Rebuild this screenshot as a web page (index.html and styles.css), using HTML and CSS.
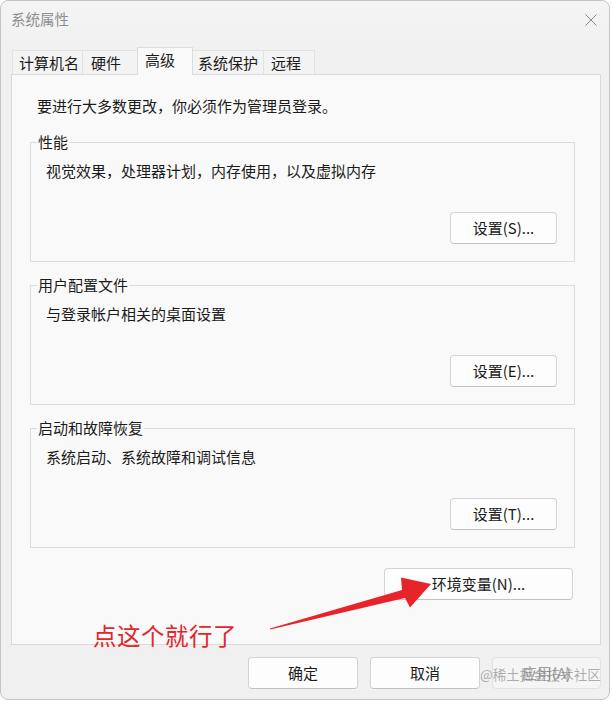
FILE: index.html
```html
<!DOCTYPE html>
<html lang="zh-CN">
<head>
<meta charset="utf-8">
<title>系统属性</title>
<link rel="stylesheet" href="styles.css">
</head>
<body>
<div class="window">
  <div class="titlebar">
    <span class="title">系统属性</span>
    <svg class="close" width="12" height="12" viewBox="0 0 12 12"><path d="M0.5 0.5 L11.5 11.5 M11.5 0.5 L0.5 11.5" stroke="#8a8a8a" stroke-width="1" fill="none"/></svg>
  </div>
  <div class="tabs">
    <div class="tab t-name">计算机名</div>
    <div class="tab t-hw">硬件</div>
    <div class="tab sel">高级</div>
    <div class="tab t-prot">系统保护</div>
    <div class="tab t-remote">远程</div>
  </div>
  <div class="panel">
    <p class="intro">要进行大多数更改，你必须作为管理员登录。</p>
    <fieldset class="group">
      <legend>性能</legend>
      <p class="desc">视觉效果，处理器计划，内存使用，以及虚拟内存</p>
      <div class="btnrow"><button class="btn set">设置(S)...</button></div>
    </fieldset>
    <fieldset class="group">
      <legend>用户配置文件</legend>
      <p class="desc">与登录帐户相关的桌面设置</p>
      <div class="btnrow"><button class="btn set">设置(E)...</button></div>
    </fieldset>
    <fieldset class="group">
      <legend>启动和故障恢复</legend>
      <p class="desc">系统启动、系统故障和调试信息</p>
      <div class="btnrow"><button class="btn set">设置(T)...</button></div>
    </fieldset>
    <div class="envrow"><button class="btn env">环境变量(N)...</button></div>
  </div>
  <div class="footer">
    <button class="btn foot">确定</button>
    <button class="btn foot">取消</button>
    <button class="btn foot disabled">应用(A)</button>
  </div>
  <svg class="arrow" width="613" height="702" viewBox="0 0 613 702">
    <polygon points="270,628.5 402,590 401,577.5 431,584 410,607.5 405,598 270,629.5" fill="#e8242b"/>
  </svg>
  <div class="note">点这个就行了</div>
  <div class="watermark">@稀土掘金技术社区</div>
</div>
</body>
</html>
```

FILE: styles.css
```css
* { box-sizing: border-box; }
html, body { margin: 0; padding: 0; }
body {
  background: #ffffff;
  width: 613px;
  height: 702px;
  overflow: hidden;
  font-family: "Noto Sans CJK SC", "Noto Sans", sans-serif;
  color: #1b1b1b;
}
.window {
  position: relative;
  width: 610px;
  height: 700px;
  background: #f0f0f0;
  border: 1px solid #c4c4c4;
  border-radius: 8px;
  display: flex;
  flex-direction: column;
}
.titlebar {
  height: 46px;
  display: flex;
  align-items: flex-start;
  justify-content: space-between;
  padding: 8px 12px 0 10px;
  background: linear-gradient(#f4f4f4, #f1f1f1);
  border-radius: 8px 8px 0 0;
}
.title {
  font-size: 14.5px;
  line-height: 20px;
  color: #8f8f8f;
}
.close { margin-top: 5px; }
.tabs {
  display: flex;
  align-items: flex-end;
  padding-left: 11px;
  height: 27px;
  margin-top: 0;
}
.tab {
  height: 24px;
  font-size: 15px;
  line-height: 24px;
  padding-left: 6px;
  background: #f3f3f3;
  border: 1px solid #e2e2e2;
  border-bottom: none;
  border-right: none;
  white-space: nowrap;
}
.t-name { width: 70px; }
.t-hw { width: 55px; padding-left: 8px; }
.t-prot { width: 70px; border-left: none; padding-left: 5px; }
.t-remote { width: 52px; padding-left: 7px; border-right: 1px solid #e2e2e2; }
.tab.sel {
  width: 56px;
  height: 28px;
  padding-left: 7px;
  line-height: 24px;
  background: #f9f9f9;
  border: 1px solid #dcdcdc;
  border-bottom: none;
  margin-bottom: -1px;
  position: relative;
  z-index: 1;
}
.panel {
  margin: 0 8px 0 10px;
  height: 571px;
  background: #f9f9f9;
  border: 1px solid #dadada;
  padding: 21px 25px 0 18px;
  display: flex;
  flex-direction: column;
}
.intro {
  margin: 0 0 16px 7px;
  font-size: 15px;
  line-height: 20px;
}
.group {
  margin: 0 0 13px 0;
  padding: 9px 17px 17px 15px;
  border: 1px solid #dcdcdc;
  min-width: 0;
}
.group legend {
  font-size: 15px;
  line-height: 20px;
  padding: 0 1px;
  margin-left: -9px;
}
.desc {
  margin: 0;
  font-size: 15px;
  line-height: 20px;
}
.btnrow {
  display: flex;
  justify-content: flex-end;
  margin-top: 31px;
}
.btn {
  font-family: "Noto Sans CJK SC", "Noto Sans", sans-serif;
  font-size: 15px;
  color: #1b1b1b;
  background: #fdfdfd;
  border: 1px solid #d3d3d3;
  border-bottom-color: #c2c2c2;
  border-radius: 4px;
  height: 32px;
  padding: 0;
  line-height: 20px;
}
.set { width: 107px; }
.envrow {
  display: flex;
  justify-content: flex-end;
  margin-top: 7px;
  padding-right: 2px;
}
.env { width: 189px; }
.footer {
  display: flex;
  justify-content: flex-end;
  gap: 12px;
  padding: 12px 8px 0 0;
}
.foot { width: 110px; }
.foot.disabled {
  width: 109px;
  color: #a0a0a0;
  background: #f5f5f5;
  border-color: #e2e2e2;
}
.arrow {
  position: absolute;
  left: -1px;
  top: -1px;
  pointer-events: none;
}
.note {
  position: absolute;
  left: 92px;
  top: 618px;
  font-size: 23.5px;
  line-height: 32px;
  color: #e3252c;
  letter-spacing: 0.5px;
}
.watermark {
  position: absolute;
  left: 479px;
  top: 663px;
  font-size: 13.5px;
  line-height: 20px;
  color: rgba(110, 110, 110, 0.55);
  white-space: nowrap;
}
```
